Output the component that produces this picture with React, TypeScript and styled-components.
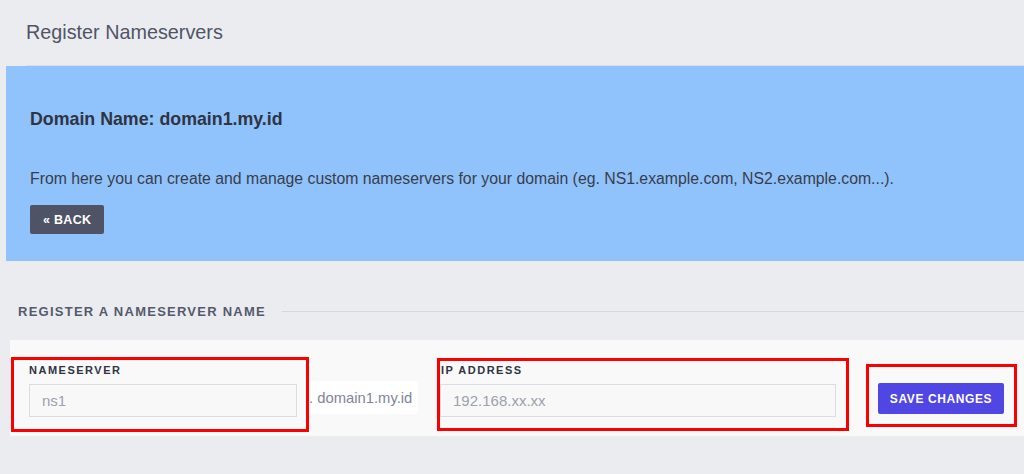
import styled, { createGlobalStyle } from "styled-components";

const GlobalStyle = createGlobalStyle`
  html, body {
    margin: 0;
    padding: 0;
    background: #ebecf0;
    font-family: "Liberation Sans", Arial, sans-serif;
  }
`;

const Page = styled.div`
  width: 1024px;
  height: 474px;
  overflow: hidden;
  background: #ebecf0;
`;

const Header = styled.div`
  margin-left: 26px;
  height: 66px;
  box-sizing: border-box;
  padding-top: 20px;
  border-bottom: 1px solid #dcdde2;
`;

const Title = styled.h1`
  margin: 0;
  font-size: 19.8px;
  line-height: 24px;
  font-weight: 400;
  color: #4f5565;
`;

const InfoPanel = styled.section`
  margin-left: 6px;
  background: #90c3fb;
  padding: 42px 24px 27px;
`;

const DomainHeading = styled.h2`
  margin: 0;
  font-size: 17.8px;
  line-height: 22px;
  font-weight: 700;
  color: #2f3443;
`;

const Lead = styled.p`
  margin: 39px 0 16px;
  font-size: 15.8px;
  line-height: 20px;
  color: #383d4b;
`;

const BackButton = styled.button`
  height: 29px;
  padding: 0 13px;
  border: 0;
  border-radius: 2px;
  background: #4f5366;
  color: #fff;
  font-family: inherit;
  font-size: 12.5px;
  font-weight: 700;
  letter-spacing: 0.3px;
`;

const SectionTitle = styled.div`
  display: flex;
  align-items: center;
  gap: 16px;
  margin: 42px 0 0 18px;
  height: 16px;
  font-size: 13px;
  font-weight: 700;
  letter-spacing: 1.25px;
  color: #545a6b;
  white-space: nowrap;

  &::after {
    content: "";
    flex: 1;
    height: 1px;
    background: #d6d7dc;
  }
`;

const FormPanel = styled.div`
  display: flex;
  align-items: flex-start;
  margin: 21px 0 0 10px;
  padding: 17px 0 4px 1px;
  background: #f9f9fa;
`;

const Highlight = styled.div<{ $width: number; $pad: string; $top?: number }>`
  box-sizing: border-box;
  width: ${({ $width }) => $width}px;
  margin-top: ${({ $top }) => $top ?? 0}px;
  padding: ${({ $pad }) => $pad};
  border: 3px solid #fa0000;
  display: flex;
  flex-direction: column;
`;

const Label = styled.label<{ $indent?: number }>`
  font-size: 11px;
  line-height: 14px;
  font-weight: 700;
  letter-spacing: 1.5px;
  color: #2f3442;
  margin: 0 0 7px ${({ $indent }) => $indent ?? 0}px;
`;

const Input = styled.input`
  box-sizing: border-box;
  height: 33px;
  width: 100%;
  padding: 0 12px;
  border: 1px solid #dcdde3;
  background: #f8f8f9;
  font-family: inherit;
  font-size: 15px;
  color: #333;
  outline: none;

  &::placeholder {
    color: #9ca1ad;
  }
`;

const Addon = styled.div`
  box-sizing: border-box;
  margin-top: 24px;
  width: 109px;
  height: 33px;
  display: flex;
  align-items: center;
  background: #fff;
  border-radius: 0 4px 4px 0;
  font-size: 14.8px;
  color: #7f8597;
  white-space: pre;
`;

const Spacer = styled.div<{ $w: number }>`
  width: ${({ $w }) => $w}px;
  flex: none;
`;

const SaveButton = styled.button`
  height: 31px;
  width: 126px;
  border: 0;
  border-radius: 2px;
  background: #5046e4;
  color: #fff;
  font-family: inherit;
  font-size: 12px;
  font-weight: 700;
  letter-spacing: 0.6px;
`;

export default function App() {
  return (
    <>
      <GlobalStyle />
      <Page>
        <Header>
          <Title>Register Nameservers</Title>
        </Header>
        <InfoPanel>
          <DomainHeading>Domain Name: domain1.my.id</DomainHeading>
          <Lead>
            From here you can create and manage custom nameservers for your
            domain (eg. NS1.example.com, NS2.example.com...).
          </Lead>
          <BackButton>« BACK</BackButton>
        </InfoPanel>
        <SectionTitle>REGISTER A NAMESERVER NAME</SectionTitle>
        <FormPanel>
          <Highlight $width={298} $pad="3px 9px 12px 15px">
            <Label>NAMESERVER</Label>
            <Input placeholder="ns1" />
          </Highlight>
          <Addon>{". domain1.my.id"}</Addon>
          <Spacer $w={19} />
          <Highlight $width={412} $pad="2px 10px 11px 0" $top={1}>
            <Label $indent={1}>IP ADDRESS</Label>
            <Input placeholder="192.168.xx.xx" />
          </Highlight>
          <Spacer $w={17} />
          <Highlight $width={151} $pad="16px 10px 10px 9px" $top={7}>
            <SaveButton>SAVE CHANGES</SaveButton>
          </Highlight>
        </FormPanel>
      </Page>
    </>
  );
}
